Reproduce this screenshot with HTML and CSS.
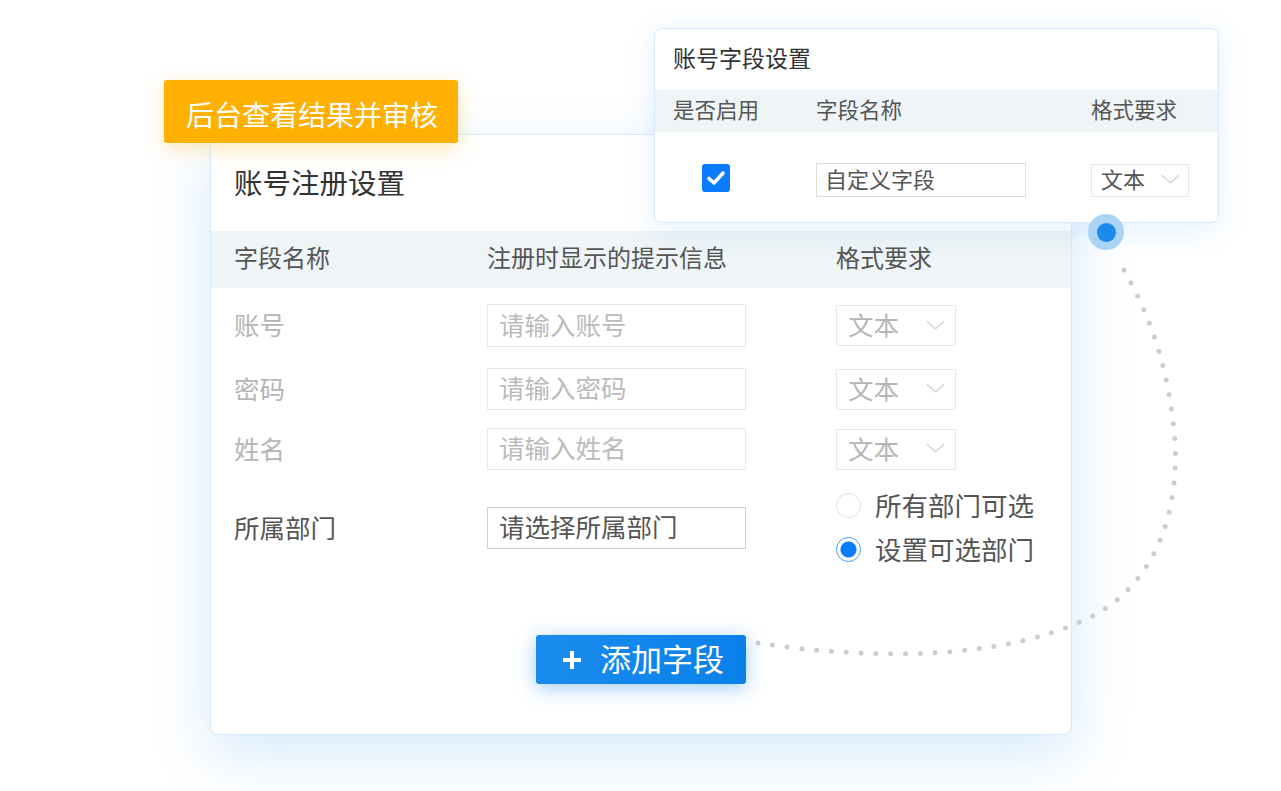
FILE: index.html
```html
<!DOCTYPE html>
<html lang="zh-CN">
<head>
    <meta charset="UTF-8">
    <meta name="viewport" content="width=device-width, initial-scale=1.0">
    <title>账号注册设置</title>
    <link rel="stylesheet" href="styles.css">
</head>
<body>
    <div class="stage">
        <!-- main registration card -->
        <div class="card reg-card">
            <div class="card-title">账号注册设置</div>
            <div class="table-head reg-grid">
                <span>字段名称</span>
                <span>注册时显示的提示信息</span>
                <span>格式要求</span>
            </div>
            <div class="reg-rows">
                <div class="reg-grid reg-row muted">
                    <span>账号</span>
                    <div class="input">请输入账号</div>
                    <div class="select">文本<svg class="chev" viewBox="0 0 20 10"><path d="M1 1 L10 9 L19 1"/></svg></div>
                </div>
                <div class="reg-grid reg-row muted">
                    <span>密码</span>
                    <div class="input">请输入密码</div>
                    <div class="select">文本<svg class="chev" viewBox="0 0 20 10"><path d="M1 1 L10 9 L19 1"/></svg></div>
                </div>
                <div class="reg-grid reg-row muted">
                    <span>姓名</span>
                    <div class="input">请输入姓名</div>
                    <div class="select">文本<svg class="chev" viewBox="0 0 20 10"><path d="M1 1 L10 9 L19 1"/></svg></div>
                </div>
                <div class="reg-grid reg-row dept">
                    <span>所属部门</span>
                    <div class="input">请选择所属部门</div>
                    <div class="radios">
                        <label class="radio"><i></i>所有部门可选</label>
                        <label class="radio on"><i></i>设置可选部门</label>
                    </div>
                </div>
            </div>
            <div class="card-foot">
                <button class="add-btn">
                    <svg viewBox="0 0 20 20"><path d="M10 1 V19 M1 10 H19"/></svg>
                    添加字段
                </button>
            </div>
        </div>

        <div class="tag">后台查看结果并审核</div>

        <!-- dotted connector -->
        <svg class="connector" viewBox="0 0 1281 791">
            <path d="M758 643 C 870 660 1010 662 1100 612 C 1168 570 1180 490 1174 430 C 1166 350 1142 300 1117 258"/>
        </svg>

        <!-- account field card -->
        <div class="card field-card">
            <div class="field-title">账号字段设置</div>
            <div class="table-head field-grid">
                <span>是否启用</span>
                <span>字段名称</span>
                <span>格式要求</span>
            </div>
            <div class="field-grid field-row">
                <span class="check">
                    <svg viewBox="0 0 28 28"><path d="M7 14.5 L12 19 L21 9"/></svg>
                </span>
                <div class="input small">自定义字段</div>
                <div class="select small">文本<svg class="chev" viewBox="0 0 20 10"><path d="M1 1 L10 9 L19 1"/></svg></div>
            </div>
        </div>

        <div class="pin"><i></i></div>
    </div>
</body>
</html>
```

FILE: styles.css
```css
html, body {
    margin: 0;
    padding: 0;
    background: #fff;
}
body {
    font-family: "Noto Sans CJK SC", "Noto Sans", sans-serif;
    color: #555;
}
.stage {
    position: relative;
    width: 1281px;
    height: 791px;
    overflow: hidden;
}
.card {
    position: absolute;
    box-sizing: border-box;
    background: #fff;
    border: 1px solid #d7e9fa;
    border-radius: 8px;
}

/* main card */
.reg-card {
    left: 210px;
    top: 134px;
    width: 862px;
    height: 601px;
    display: flex;
    flex-direction: column;
    box-shadow: 0 20px 60px rgba(30, 140, 240, 0.18);
}
.card-title {
    box-sizing: border-box;
    height: 96px;
    display: flex;
    align-items: center;
    padding: 0 0 3px 23px;
    font-size: 28.5px;
    color: #333;
}
.table-head {
    box-sizing: border-box;
    background: #eff4f7;
    align-items: center;
}
.reg-card .table-head {
    height: 57px;
    padding-bottom: 6px;
    font-size: 24px;
}
.reg-grid {
    display: grid;
    grid-template-columns: 253px 349px 1fr;
    padding-left: 23px;
}
.reg-rows {
    padding-top: 16px;
    display: flex;
    flex-direction: column;
}
.reg-row {
    align-items: center;
    min-height: 42px;
    font-size: 25.5px;
}
.reg-row > span {
    padding-bottom: 4px;
}
.reg-row.muted {
    color: #b5b5b5;
}
.reg-row:nth-child(2) {
    margin-top: 21px;
}
.reg-row:nth-child(3) {
    margin-top: 18px;
}
.reg-row.dept {
    margin-top: 16px;
    color: #555;
}
.input {
    box-sizing: border-box;
    width: 259px;
    height: 42px;
    border: 1px solid #e8e8e8;
    display: flex;
    align-items: center;
    padding: 0 0 5px 11px;
    font-size: 25.5px;
    color: #bbb;
}
.reg-row:first-child .input {
    height: 43px;
}
.dept .input {
    border-color: #cfcfcf;
    color: #555;
}
.select {
    box-sizing: border-box;
    width: 120px;
    height: 41px;
    border: 1px solid #e8e8e8;
    display: flex;
    align-items: center;
    justify-content: space-between;
    padding: 0 10px 4px 11px;
    font-size: 25.5px;
    color: #b5b5b5;
}
.chev {
    width: 19px;
    height: 10px;
    margin-top: 2px;
    fill: none;
    stroke: #d4d4d4;
    stroke-width: 1.5;
}
.radios {
    display: flex;
    flex-direction: column;
    margin-top: -4px;
}
.radio {
    height: 44px;
    display: flex;
    align-items: center;
    gap: 14px;
    font-size: 26.5px;
    color: #555;
}
.radio i {
    box-sizing: border-box;
    width: 25px;
    height: 25px;
    margin-top: 3px;
    border-radius: 50%;
    border: 1px solid #e2e2e2;
}
.radio.on i {
    border-color: #4aa0f6;
    background: radial-gradient(circle, #0a7cff 0 7.5px, #fff 8.5px);
}
.card-foot {
    flex: 1;
    display: flex;
    justify-content: center;
    padding-top: 65px;
}
.add-btn {
    box-sizing: border-box;
    width: 210px;
    height: 49px;
    border: 0;
    border-radius: 3px;
    background: linear-gradient(90deg, #1a8cee, #0a80ea);
    color: #fff;
    font-family: inherit;
    font-size: 31px;
    display: flex;
    align-items: center;
    justify-content: center;
    gap: 18px;
    padding: 0 0 4px 4px;
    box-shadow: 0 4px 20px rgba(20, 130, 235, 0.4);
    position: relative;
    z-index: 2;
}
.add-btn svg {
    width: 20px;
    height: 20px;
    margin-top: 4px;
    fill: none;
    stroke: #fff;
    stroke-width: 4;
}

/* orange tag */
.tag {
    position: absolute;
    left: 164px;
    top: 80px;
    width: 294px;
    height: 63px;
    box-sizing: border-box;
    padding: 5px 0 0 22px;
    display: flex;
    align-items: center;
    background: #ffb000;
    border-radius: 3px;
    color: #fff;
    font-size: 28px;
    box-shadow: 0 6px 20px rgba(255, 176, 0, 0.28);
}

.connector {
    position: absolute;
    left: 0;
    top: 0;
    width: 1281px;
    height: 791px;
    fill: none;
    stroke: #cdcdcd;
    stroke-width: 5;
    stroke-linecap: round;
    stroke-dasharray: 0 14.8;
}

/* account field card */
.field-card {
    left: 654px;
    top: 28px;
    width: 565px;
    height: 195px;
    box-shadow: 0 6px 30px rgba(30, 140, 240, 0.13);
}
.field-title {
    box-sizing: border-box;
    height: 61px;
    display: flex;
    align-items: center;
    padding: 0 0 6px 18px;
    font-size: 23px;
    color: #333;
}
.field-grid {
    display: grid;
    grid-template-columns: 143px 275px 1fr;
    padding-left: 18px;
}
.field-card .table-head {
    height: 42px;
    padding-bottom: 5px;
    font-size: 21.5px;
}
.field-row {
    padding-top: 31px;
    align-items: center;
}
.check {
    justify-self: start;
    margin: -4px 0 0 29px;
    width: 28px;
    height: 28px;
    border-radius: 3px;
    background: #0b7cff;
}
.check svg {
    width: 28px;
    height: 28px;
    fill: none;
    stroke: #fff;
    stroke-width: 3.6;
    stroke-linecap: round;
    stroke-linejoin: round;
}
.input.small {
    width: 210px;
    height: 34px;
    padding: 0 0 4px 8px;
    font-size: 22px;
    color: #555;
    border-color: #dedede;
}
.select.small {
    width: 98px;
    height: 33px;
    padding: 0 8px 4px 9px;
    font-size: 22px;
    color: #555;
}

.pin {
    position: absolute;
    left: 1088px;
    top: 214px;
    width: 36px;
    height: 36px;
    border-radius: 50%;
    background: #a9d4f8;
    display: flex;
    align-items: center;
    justify-content: center;
}
.pin i {
    width: 19px;
    height: 19px;
    border-radius: 50%;
    background: #1b8ae9;
}
```
